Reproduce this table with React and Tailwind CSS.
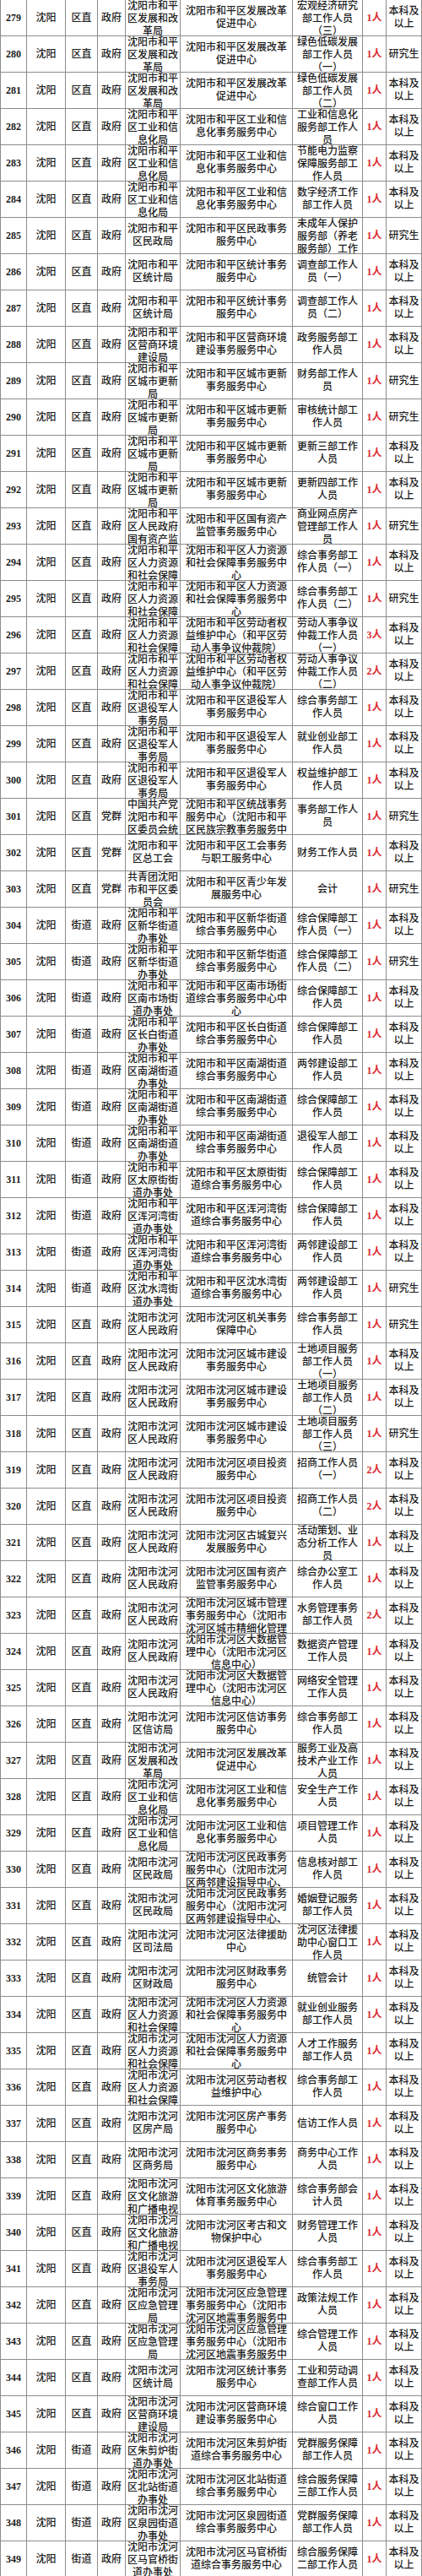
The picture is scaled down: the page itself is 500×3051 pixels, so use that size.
const rows = [
  "279|区直|政府|沈阳市和平区发展和改革局|沈阳市和平区发展改革促进中心|宏观经济研究部工作人员（三）|1人|本科及以上",
  "280|区直|政府|沈阳市和平区发展和改革局|沈阳市和平区发展改革促进中心|绿色低碳发展部工作人员（一）|1人|研究生",
  "281|区直|政府|沈阳市和平区发展和改革局|沈阳市和平区发展改革促进中心|绿色低碳发展部工作人员（二）|1人|本科及以上",
  "282|区直|政府|沈阳市和平区工业和信息化局|沈阳市和平区工业和信息化事务服务中心|工业和信息化服务部工作人员|1人|本科及以上",
  "283|区直|政府|沈阳市和平区工业和信息化局|沈阳市和平区工业和信息化事务服务中心|节能电力监察保障服务部工作人员|1人|本科及以上",
  "284|区直|政府|沈阳市和平区工业和信息化局|沈阳市和平区工业和信息化事务服务中心|数字经济工作部工作人员|1人|本科及以上",
  "285|区直|政府|沈阳市和平区民政局|沈阳市和平区民政事务服务中心|未成年人保护服务部（养老服务部）工作人员|1人|研究生",
  "286|区直|政府|沈阳市和平区统计局|沈阳市和平区统计事务服务中心|调查部工作人员（一）|1人|本科及以上",
  "287|区直|政府|沈阳市和平区统计局|沈阳市和平区统计事务服务中心|调查部工作人员（二）|1人|本科及以上",
  "288|区直|政府|沈阳市和平区营商环境建设局|沈阳市和平区营商环境建设事务服务中心|政务服务部工作人员|1人|本科及以上",
  "289|区直|政府|沈阳市和平区城市更新局|沈阳市和平区城市更新事务服务中心|财务部工作人员|1人|研究生",
  "290|区直|政府|沈阳市和平区城市更新局|沈阳市和平区城市更新事务服务中心|审核统计部工作人员|1人|研究生",
  "291|区直|政府|沈阳市和平区城市更新局|沈阳市和平区城市更新事务服务中心|更新三部工作人员|1人|本科及以上",
  "292|区直|政府|沈阳市和平区城市更新局|沈阳市和平区城市更新事务服务中心|更新四部工作人员|1人|本科及以上",
  "293|区直|政府|沈阳市和平区人民政府国有资产监督管理局|沈阳市和平区国有资产监管事务服务中心|商业网点房产管理部工作人员|1人|研究生",
  "294|区直|政府|沈阳市和平区人力资源和社会保障局|沈阳市和平区人力资源和社会保障事务服务中心|综合事务部工作人员（一）|1人|本科及以上",
  "295|区直|政府|沈阳市和平区人力资源和社会保障局|沈阳市和平区人力资源和社会保障事务服务中心|综合事务部工作人员（二）|1人|研究生",
  "296|区直|政府|沈阳市和平区人力资源和社会保障局|沈阳市和平区劳动者权益维护中心（和平区劳动人事争议仲裁院）|劳动人事争议仲裁工作人员（一）|3人|本科及以上",
  "297|区直|政府|沈阳市和平区人力资源和社会保障局|沈阳市和平区劳动者权益维护中心（和平区劳动人事争议仲裁院）|劳动人事争议仲裁工作人员（二）|2人|本科及以上",
  "298|区直|政府|沈阳市和平区退役军人事务局|沈阳市和平区退役军人事务服务中心|综合事务部工作人员|1人|本科及以上",
  "299|区直|政府|沈阳市和平区退役军人事务局|沈阳市和平区退役军人事务服务中心|就业创业部工作人员|1人|本科及以上",
  "300|区直|政府|沈阳市和平区退役军人事务局|沈阳市和平区退役军人事务服务中心|权益维护部工作人员|1人|本科及以上",
  "301|区直|党群|中国共产党沈阳市和平区委员会统一战线工作部|沈阳市和平区统战事务服务中心（沈阳市和平区民族宗教事务服务中心）|事务部工作人员|1人|研究生",
  "302|区直|党群|沈阳市和平区总工会|沈阳市和平区工会事务与职工服务中心|财务工作人员|1人|本科及以上",
  "303|区直|党群|共青团沈阳市和平区委员会|沈阳市和平区青少年发展服务中心|会计|1人|研究生",
  "304|街道|政府|沈阳市和平区新华街道办事处|沈阳市和平区新华街道综合事务服务中心|综合保障部工作人员（一）|1人|本科及以上",
  "305|街道|政府|沈阳市和平区新华街道办事处|沈阳市和平区新华街道综合事务服务中心|综合保障部工作人员（二）|1人|研究生",
  "306|街道|政府|沈阳市和平区南市场街道办事处|沈阳市和平区南市场街道综合事务服务中心中心|综合保障部工作人员|1人|本科及以上",
  "307|街道|政府|沈阳市和平区长白街道办事处|沈阳市和平区长白街道综合事务服务中心|综合保障部工作人员|1人|本科及以上",
  "308|街道|政府|沈阳市和平区南湖街道办事处|沈阳市和平区南湖街道综合事务服务中心|两邻建设部工作人员|1人|本科及以上",
  "309|街道|政府|沈阳市和平区南湖街道办事处|沈阳市和平区南湖街道综合事务服务中心|综合保障部工作人员|1人|本科及以上",
  "310|街道|政府|沈阳市和平区南湖街道办事处|沈阳市和平区南湖街道综合事务服务中心|退役军人部工作人员|1人|本科及以上",
  "311|街道|政府|沈阳市和平区太原街街道办事处|沈阳市和平区太原街街道综合事务服务中心|综合保障部工作人员|1人|本科及以上",
  "312|街道|政府|沈阳市和平区浑河湾街道办事处|沈阳市和平区浑河湾街道综合事务服务中心|综合保障部工作人员|1人|本科及以上",
  "313|街道|政府|沈阳市和平区浑河湾街道办事处|沈阳市和平区浑河湾街道综合事务服务中心|两邻建设部工作人员|1人|本科及以上",
  "314|街道|政府|沈阳市和平区沈水湾街道办事处|沈阳市和平区沈水湾街道综合事务服务中心|两邻建设部工作人员|1人|研究生",
  "315|区直|政府|沈阳市沈河区人民政府|沈阳市沈河区机关事务保障中心|综合事务部工作人员|1人|研究生",
  "316|区直|政府|沈阳市沈河区人民政府|沈阳市沈河区城市建设事务服务中心|土地项目服务部工作人员（一）|1人|本科及以上",
  "317|区直|政府|沈阳市沈河区人民政府|沈阳市沈河区城市建设事务服务中心|土地项目服务部工作人员（二）|1人|本科及以上",
  "318|区直|政府|沈阳市沈河区人民政府|沈阳市沈河区城市建设事务服务中心|土地项目服务部工作人员（三）|1人|研究生",
  "319|区直|政府|沈阳市沈河区人民政府|沈阳市沈河区项目投资服务中心|招商工作人员（一）|2人|本科及以上",
  "320|区直|政府|沈阳市沈河区人民政府|沈阳市沈河区项目投资服务中心|招商工作人员（二）|2人|本科及以上",
  "321|区直|政府|沈阳市沈河区人民政府|沈阳市沈河区古城复兴发展服务中心|活动策划、业态分析工作人员|1人|本科及以上",
  "322|区直|政府|沈阳市沈河区人民政府|沈阳市沈河区国有资产监管事务服务中心|综合办公室工作人员|1人|本科及以上",
  "323|区直|政府|沈阳市沈河区人民政府|沈阳市沈河区城市管理事务服务中心（沈阳市沈河区城市精细化管理中心）|水务管理事务部工作人员|2人|本科及以上",
  "324|区直|政府|沈阳市沈河区人民政府|沈阳市沈河区大数据管理中心（沈阳市沈河区信息中心）|数据资产管理工作人员|1人|本科及以上",
  "325|区直|政府|沈阳市沈河区人民政府|沈阳市沈河区大数据管理中心（沈阳市沈河区信息中心）|网络安全管理工作人员|1人|本科及以上",
  "326|区直|政府|沈阳市沈河区信访局|沈阳市沈河区信访事务服务中心|综合事务部工作人员|1人|本科及以上",
  "327|区直|政府|沈阳市沈河区发展和改革局|沈阳市沈河区发展改革促进中心|服务工业及高技术产业工作人员|1人|本科及以上",
  "328|区直|政府|沈阳市沈河区工业和信息化局|沈阳市沈河区工业和信息化事务服务中心|安全生产工作人员|1人|本科及以上",
  "329|区直|政府|沈阳市沈河区工业和信息化局|沈阳市沈河区工业和信息化事务服务中心|项目管理工作人员|1人|本科及以上",
  "330|区直|政府|沈阳市沈河区民政局|沈阳市沈河区民政事务服务中心（沈阳市沈河区两邻建设指导中心、沈阳市沈河区社会救助服务中心）|信息核对部工作人员|1人|本科及以上",
  "331|区直|政府|沈阳市沈河区民政局|沈阳市沈河区民政事务服务中心（沈阳市沈河区两邻建设指导中心、沈阳市沈河区社会救助服务中心）|婚姻登记服务部工作人员|1人|本科及以上",
  "332|区直|政府|沈阳市沈河区司法局|沈阳市沈河区法律援助中心|沈河区法律援助中心窗口工作人员|1人|本科及以上",
  "333|区直|政府|沈阳市沈河区财政局|沈阳市沈河区财政事务服务中心|统管会计|1人|本科及以上",
  "334|区直|政府|沈阳市沈河区人力资源和社会保障局|沈阳市沈河区人力资源和社会保障事务服务中心|就业创业服务部工作人员|1人|本科及以上",
  "335|区直|政府|沈阳市沈河区人力资源和社会保障局|沈阳市沈河区人力资源和社会保障事务服务中心|人才工作服务部工作人员|1人|本科及以上",
  "336|区直|政府|沈阳市沈河区人力资源和社会保障局|沈阳市沈河区劳动者权益维护中心|综合事务部工作人员|1人|本科及以上",
  "337|区直|政府|沈阳市沈河区房产局|沈阳市沈河区房产事务服务中心|信访工作人员|1人|本科及以上",
  "338|区直|政府|沈阳市沈河区商务局|沈阳市沈河区商务事务服务中心|商务中心工作人员|1人|本科及以上",
  "339|区直|政府|沈阳市沈河区文化旅游和广播电视局|沈阳市沈河区文化旅游体育事务服务中心|综合事务部会计人员|1人|本科及以上",
  "340|区直|政府|沈阳市沈河区文化旅游和广播电视局|沈阳市沈河区考古和文物保护中心|财务管理工作人员|1人|本科及以上",
  "341|区直|政府|沈阳市沈河区退役军人事务局|沈阳市沈河区退役军人事务服务中心|综合事务部工作人员|1人|本科及以上",
  "342|区直|政府|沈阳市沈河区应急管理局|沈阳市沈河区应急管理事务服务中心（沈阳市沈河区地震事务服务中心）|政策法规工作人员|1人|本科及以上",
  "343|区直|政府|沈阳市沈河区应急管理局|沈阳市沈河区应急管理事务服务中心（沈阳市沈河区地震事务服务中心）|综合管理工作人员|1人|本科及以上",
  "344|区直|政府|沈阳市沈河区统计局|沈阳市沈河区统计事务服务中心|工业和劳动调查部工作人员|1人|本科及以上",
  "345|区直|政府|沈阳市沈河区营商环境建设局|沈阳市沈河区营商环境建设事务服务中心|综合窗口工作人员|1人|本科及以上",
  "346|街道|政府|沈阳市沈河区朱剪炉街道办事处|沈阳市沈河区朱剪炉街道综合事务服务中心|党群服务保障部工作人员|1人|本科及以上",
  "347|街道|政府|沈阳市沈河区北站街道办事处|沈阳市沈河区北站街道综合事务服务中心|综合服务保障三部工作人员|1人|本科及以上",
  "348|街道|政府|沈阳市沈河区泉园街道办事处|沈阳市沈河区泉园街道综合事务服务中心|党群服务保障部工作人员|1人|本科及以上",
  "349|街道|政府|沈阳市沈河区马官桥街道办事处|沈阳市沈河区马官桥街道综合事务服务中心|综合服务保障二部工作人员|1人|本科及以上",
].map((line) => line.split("|"));

// one cell of the sheet: text centred, but kept at the top when it overflows
const Cell = ({ children, className = "" }) => (
  <div
    className={`flex h-[43px] justify-center overflow-hidden border-r border-b border-[#8c8c8c] text-center [align-items:safe_center] ${className}`}
  >
    <div>{children}</div>
  </div>
);

export default function App() {
  return (
    <div className="w-[500px] bg-white font-['Liberation_Serif','Noto_Sans_CJK_SC',serif] text-[12px] leading-[15px] font-medium text-[#1c1c1c]">
      <div className="grid grid-cols-[32px_46px_38px_33px_65px_133px_83px_28px_42px]">
        {rows.map(([no, level, kind, dept, unit, post, count, edu]) => (
          <div key={no} className="contents">
            <Cell className="border-l font-bold">{no}</Cell>
            <Cell>沈阳</Cell>
            <Cell>{level}</Cell>
            <Cell>{kind}</Cell>
            <Cell className="px-px">{dept}</Cell>
            <Cell className="px-[5px]">{unit}</Cell>
            <Cell className="px-[3px]">{post}</Cell>
            <Cell className="font-bold text-[#dc2a2f]">{count}</Cell>
            <Cell className="px-px">{edu}</Cell>
          </div>
        ))}
      </div>
    </div>
  );
}
